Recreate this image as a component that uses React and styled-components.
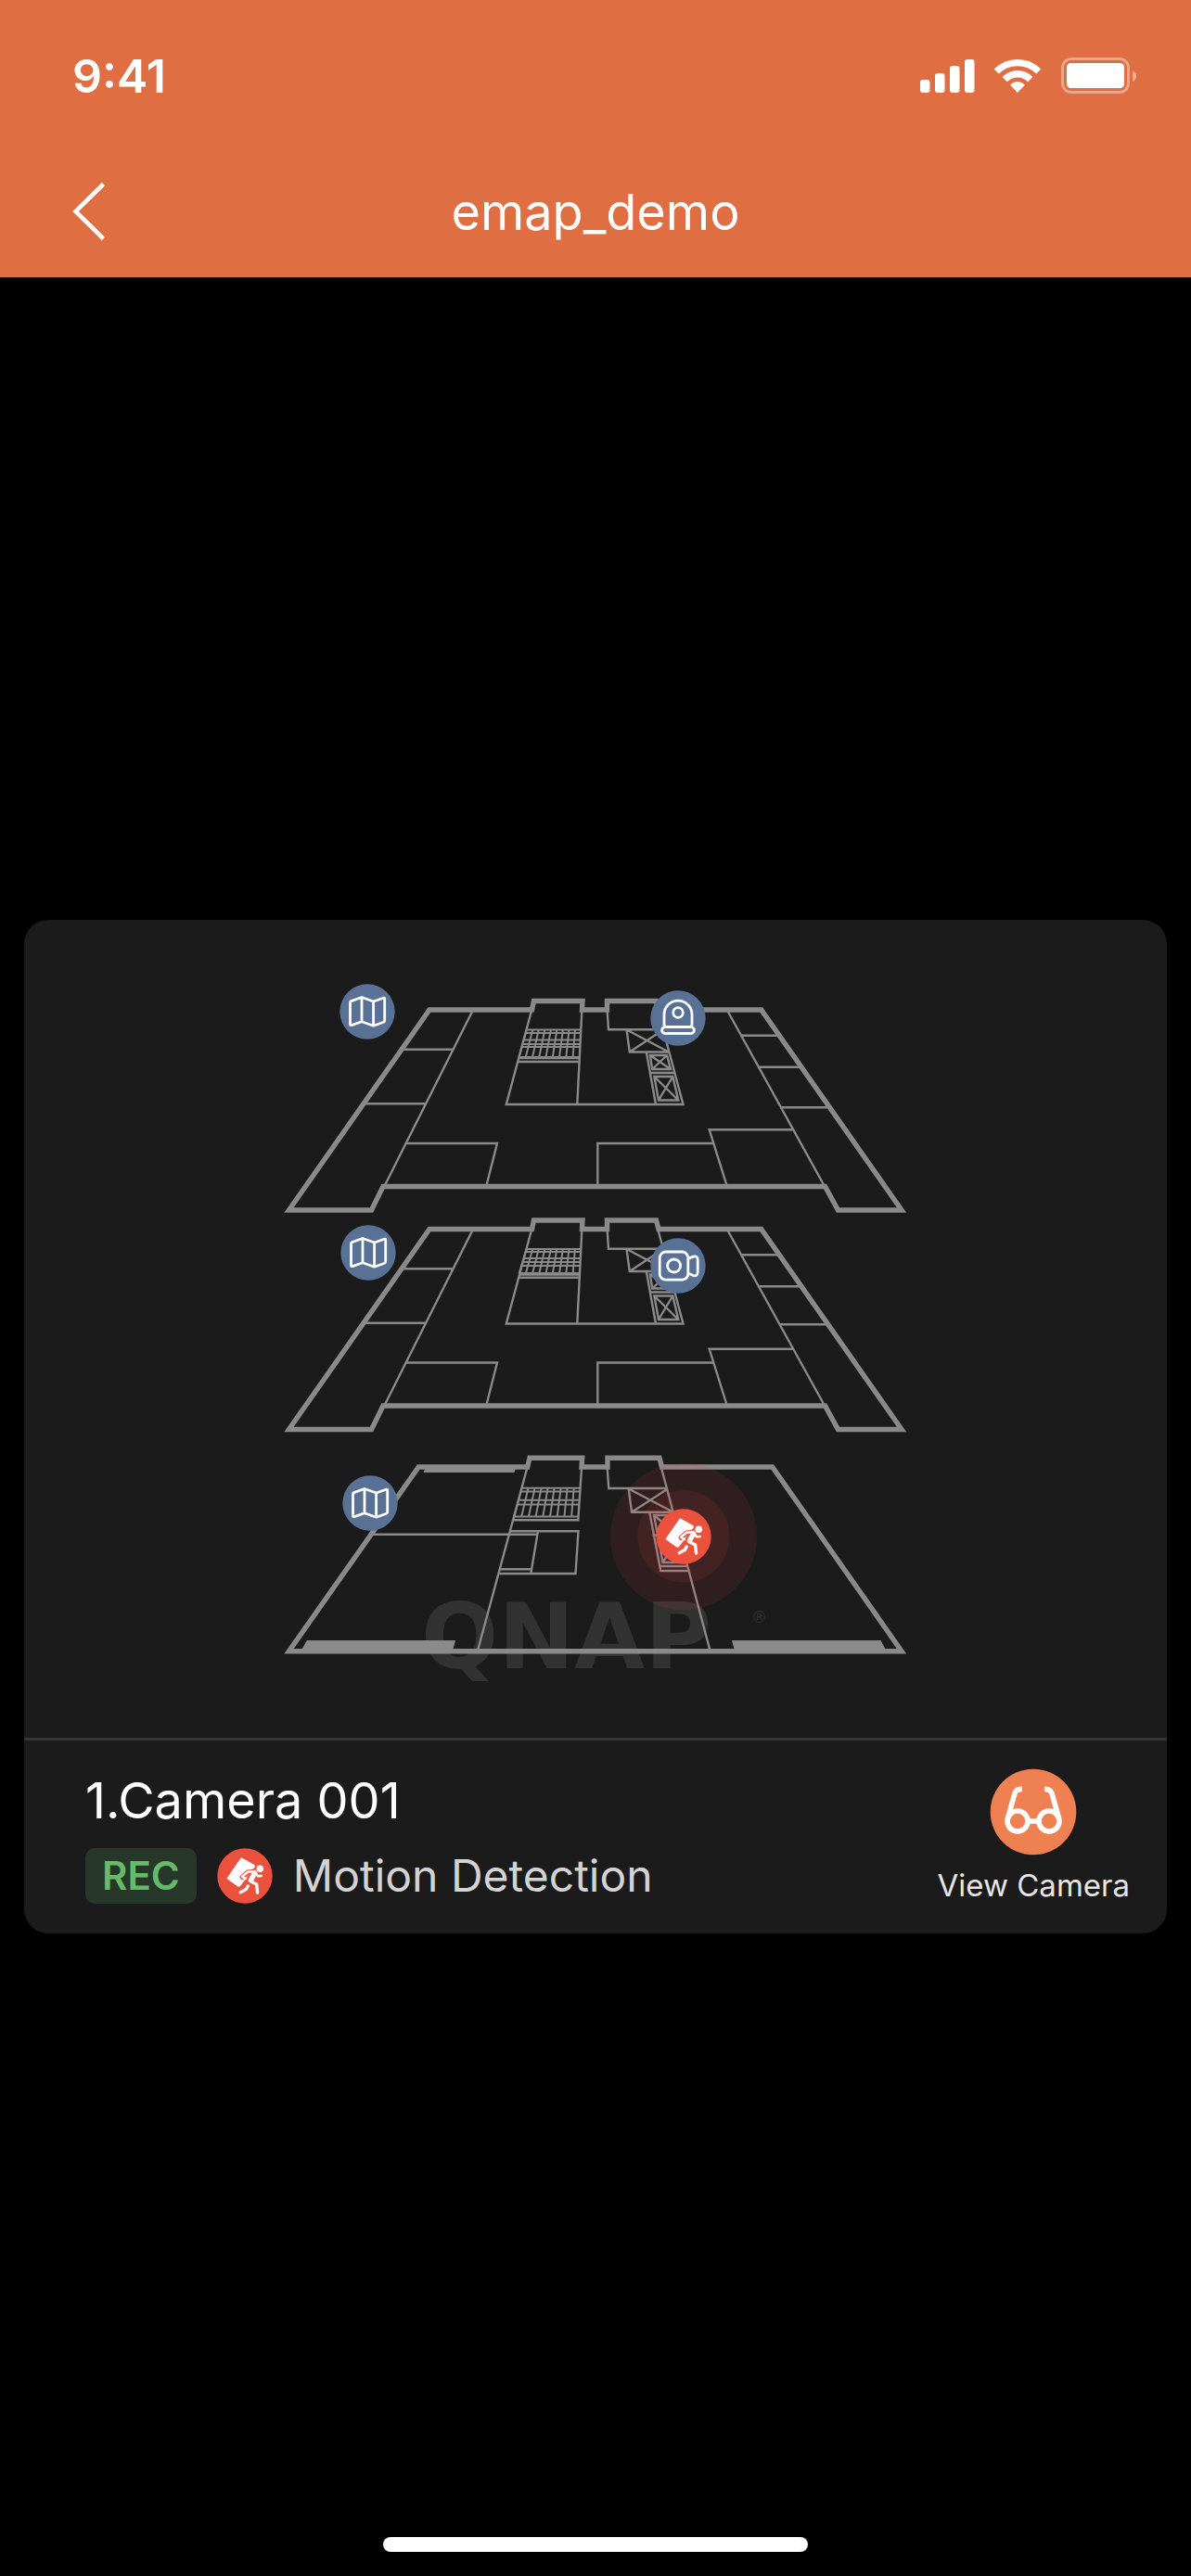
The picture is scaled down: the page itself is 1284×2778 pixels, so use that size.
import React from "react";
import styled, { createGlobalStyle } from "styled-components";

const GlobalStyle = createGlobalStyle`
  * { box-sizing: border-box; }
  body {
    margin: 0;
    background: #000;
    font-family: Inter, Roboto, "Liberation Sans", sans-serif;
    color: #fff;
  }
  button { font: inherit; color: inherit; border: 0; padding: 0; background: none; cursor: pointer; }
`;

const Screen = styled.div`
  min-height: 100vh;
  display: flex;
  flex-direction: column;
  background: #000;
`;

const Header = styled.header`
  background: #df6e42;
`;

const StatusBar = styled.div`
  display: flex;
  align-items: center;
  justify-content: space-between;
  height: 164px;
  padding: 0 58px 0 78px;
`;

const Clock = styled.span`
  font-size: 50px;
  line-height: 60px;
  font-weight: 600;
`;

const StatusIcons = styled.svg`
  display: block;
  width: 234px;
  height: 40px;
`;

const NavBar = styled.nav`
  display: grid;
  grid-template-columns: 120px 1fr 120px;
  align-items: start;
  height: 135px;
  padding: 0 36px;
`;

const BackButton = styled.button`
  display: flex;
  align-items: center;
  justify-content: center;
  height: 128px;
  svg { display: block; width: 40px; height: 68px; }
`;

const Title = styled.h1`
  margin: 0;
  text-align: center;
  font-size: 54px;
  line-height: 130px;
  font-weight: 400;
`;

const Main = styled.main`
  flex: 1;
  display: flex;
  flex-direction: column;
  justify-content: center;
  padding: 42px 26px 0;
`;

const Card = styled.section`
  border-radius: 26px;
  background: #1b1b1c;
  overflow: hidden;
`;

const MapCanvas = styled.div`
  position: relative;
  border-bottom: 3px solid #353536;
`;

const FloorPlan = styled.svg`
  display: block;
  width: 100%;
  height: auto;
`;

const Pin = styled.button`
  position: absolute;
  left: ${(p) => (p.$x / 1232) * 100}%;
  top: ${(p) => (p.$y / 882) * 100}%;
  transform: translate(-50%, -50%);
  display: grid;
  place-items: center;
  width: ${(p) => (p.$alert ? 158 : 60)}px;
  height: ${(p) => (p.$alert ? 158 : 60)}px;
  border-radius: 50%;
  background: ${(p) =>
    p.$alert
      ? "radial-gradient(circle, rgba(235, 64, 64, 0.19) 49px, rgba(235, 64, 64, 0.1) 50px)"
      : "transparent"};
`;

const Disc = styled.svg`
  display: block;
  width: 60px;
  height: 60px;
  flex: none;
`;

const Details = styled.div`
  display: flex;
  align-items: flex-start;
  justify-content: space-between;
  padding: 30px 40px 32px 66px;
`;

const Info = styled.div`
  display: flex;
  flex-direction: column;
  gap: 16px;
`;

const CameraName = styled.h2`
  margin: 0;
  font-size: 54px;
  line-height: 70px;
  font-weight: 400;
`;

const EventRow = styled.div`
  display: flex;
  align-items: center;
  gap: 22px;
`;

const RecBadge = styled.span`
  padding: 0 18px;
  border-radius: 10px;
  background: #27372a;
  color: #66bb6a;
  font-size: 42px;
  line-height: 60px;
  font-weight: 600;
`;

const EventName = styled.span`
  font-size: 48px;
  line-height: 60px;
  color: #d3d3d3;
`;

const ViewButton = styled.button`
  display: flex;
  flex-direction: column;
  align-items: center;
  gap: 12px;
  font-size: 33px;
  line-height: 40px;
  color: #e6e6e6;
  svg { display: block; width: 94px; height: 94px; }
`;

const Footer = styled.footer`
  display: flex;
  justify-content: center;
  padding-bottom: 26px;
`;

const HomeIndicator = styled.div`
  width: 458px;
  height: 16px;
  border-radius: 8px;
  background: #fff;
`;

/* Stair flight: a grid that leans from the top edge to the bottom edge */
function Stairs({ top, bottom, rows, steps = 9 }) {
  const at = (y, t) => {
    const k = (y - top.y) / (bottom.y - top.y);
    const l = top.l + (bottom.l - top.l) * k;
    const r = top.r + (bottom.r - top.r) * k;
    return l + (r - l) * t;
  };
  const cols = Array.from({ length: steps }, (_, i) => i / steps);
  return (
    <g strokeWidth="2">
      {rows.map((y) => (
        <path key={y} d={`M${at(y, 0)} ${y}H${at(y, 1)}`} />
      ))}
      {cols.map((t) => (
        <path key={t} d={`M${at(top.y, t)} ${top.y}L${at(bottom.y, t)} ${bottom.y}`} />
      ))}
    </g>
  );
}

function UpperFloor({ stairRows, stairEnd, landing, roomLine, roomX, roomEnd }) {
  return (
    <>
      <path
        strokeWidth="5.4"
        d="M463 1089H573.5L575.5 1079.5H628L627.5 1089H654.5V1079.5H707.5L710 1089H820.7L972 1305H903.5L889.5 1279.5H413L400.5 1305H311.5Z"
      />
      <g strokeWidth="2.4">
        <path d="M509.5 1090L414.5 1279M435 1131.7H489M394 1190.3H458.5M437.5 1233H536L524.3 1279" />
        <path d="M573 1090L545.8 1191H736.5L709.5 1090M627.3 1090L622.3 1191" />
        <path d="M654.7 1090L656 1110.3H715M675.5 1110.5L678.8 1134.5H721M675.5 1110.5L721 1134.5M715 1110.5L678.8 1134.5" />
        <path d="M696.8 1134.5L707 1191M701 1157H727" />
        <path d="M700.8 1138H719L723 1153H703.2ZM700.8 1138L723 1153M719 1138L703.2 1153" />
        <path d="M705.3 1161H725.3L731.3 1186.5H710ZM705.3 1161L731.3 1186.5M725.3 1161L710 1186.5" />
        <path d="M784.3 1090L888.8 1279M799.3 1116.7H839M818.3 1150.7H863" />
        <path d={`M${roomX} ${roomLine}H${roomEnd}`} />
        <path d="M854.7 1218.3H764.7L783.7 1279M768.7 1233H644.3V1279" />
        <path d={landing} />
      </g>
      <Stairs
        top={{ y: 1110.5, l: 567.7, r: 626.5 }}
        bottom={{ y: stairEnd, l: 559.5, r: 624.8 }}
        rows={stairRows}
      />
    </>
  );
}

function GroundFloor() {
  return (
    <>
      <path
        strokeWidth="5.4"
        d="M451.3 1582H568.7L571 1572.2H627.7L627 1582H655V1572.2H711L713.5 1582H832.7L972 1780.7H311.5Z"
      />
      <g stroke="none" fill="#8a8a8a">
        <path d="M458.5 1583H556L554.5 1588H456.5Z" />
        <path d="M331 1769H491L488 1780H324.5Z" />
        <path d="M789 1769H949.5L955.5 1780H792Z" />
      </g>
      <g strokeWidth="2.4">
        <path d="M568.3 1583L515 1780M402.5 1654.7H580M550 1651.3H623.5L620.5 1697H537.7M580 1651L572.3 1697M539 1692.3H573" />
        <path d="M627 1583L623.3 1639.3H553.3" />
        <path d="M654.7 1583L656.3 1605H720M677.7 1605.5L681 1630.7H726M677.7 1605.5L726 1630.7M720 1605.5L681 1630.7" />
        <path d="M713 1583L765.5 1780M700.3 1631L712.3 1694H743.3M711 1689H741M705 1634H724L739 1685H714.5ZM705 1634L730 1655M703.5 1655.5H732M708.5 1660H731L714.5 1685" />
      </g>
      <Stairs
        top={{ y: 1604.8, l: 562.5, r: 625.7 }}
        bottom={{ y: 1635.5, l: 554.5, r: 623.8 }}
        rows={[1604.8, 1608.5, 1617.7, 1622.5, 1635.5]}
      />
    </>
  );
}

function Building() {
  return (
    <FloorPlan viewBox="26 992 1232 882" role="img" aria-label="Building floor map">
      <g fill="#323233" fontFamily="'DejaVu Sans', sans-serif" fontWeight="700">
        <text x="454" y="1799" fontSize="98">QNAP</text>
        <text x="810" y="1750" fontSize="17" fontWeight="400">®</text>
      </g>
      <g fill="none" stroke="#8a8a8a">
        <UpperFloor
          stairRows={[1110.5, 1114, 1121.5, 1126, 1129, 1140]}
          stairEnd={1140}
          landing="M558.5 1145H624.5M559.5 1141H624.5"
          roomLine={1194.3}
          roomX={843}
          roomEnd={893}
        />
        <g transform="translate(0 236.5)">
          <UpperFloor
            stairRows={[1110.5, 1113.5, 1120.5, 1124.5, 1128.5, 1136.5]}
            stairEnd={1137}
            landing="M560 1138H624.5M559 1141.3H624.5"
            roomLine={1191.8}
            roomX={841}
            roomEnd={891}
          />
        </g>
        <GroundFloor />
      </g>
    </FloorPlan>
  );
}

const MapIcon = () => (
  <Disc viewBox="0 0 60 60" fill="none" stroke="#fff" strokeWidth="2.8" strokeLinejoin="round">
    <circle cx="30" cy="30" r="29.7" fill="#5a7196" stroke="none" />
    <path d="M11.5 20.2Q11.5 19 12.6 18.6L24 14.5L36.6 19L47.3 15.2Q48.7 14.8 48.7 16.2V39.6Q48.7 40.8 47.6 41.2L36.6 45.2L24 40.8L13 44.6Q11.5 45 11.5 43.6ZM24 14.5V40.8M36.6 19V45.2" />
  </Disc>
);

const DomeIcon = () => (
  <Disc viewBox="0 0 60 60" fill="none" stroke="#fff" strokeWidth="2.8">
    <circle cx="30" cy="30" r="29.7" fill="#5a7196" stroke="none" />
    <path d="M17 39.5Q15 39 15 36.5V26.2A15 15 0 0 1 45 26.2V36.5Q45 39 43 39.5" />
    <circle cx="30" cy="24" r="5.3" />
    <rect x="12.6" y="39.5" width="34.8" height="7" rx="3.5" />
  </Disc>
);

const CameraIcon = () => (
  <Disc viewBox="0 0 60 60" fill="none" stroke="#fff" strokeWidth="2.8" strokeLinejoin="round">
    <circle cx="30" cy="30" r="29.7" fill="#5a7196" stroke="none" />
    <rect x="10.2" y="15" width="30.6" height="30.2" rx="6.5" />
    <circle cx="25.6" cy="30" r="7" />
    <path d="M40.8 22.4L46.4 20.1Q51.2 19 51.2 23.5V36.8Q51.2 41.6 46.4 40.6L40.8 38" />
  </Disc>
);

const MotionIcon = () => (
  <Disc viewBox="0 0 60 60" fill="none" strokeLinecap="round" strokeLinejoin="round">
    <circle cx="30" cy="30" r="29.7" fill="#ec513e" />
    <path d="M26.3 11.2L39.8 18.6L40 20L24.4 40.6L22.8 40.8L11.4 32.6Z" fill="#fff" stroke="#fff" strokeWidth="1.6" />
    <g stroke="#ec513e">
      <path d="M40.5 26.5L35.5 34.5" strokeWidth="8" />
      <path d="M40 25.5L33 26.2L27.3 31.2" strokeWidth="5.4" />
      <path d="M33.5 39.5L31.5 44L25.5 47.5" strokeWidth="5.4" />
    </g>
    <g stroke="#fff">
      <path d="M40.5 27L36.5 34.5" strokeWidth="5.5" />
      <path d="M41 25L33.2 25.8L27 30.8L31 33" strokeWidth="2.4" />
      <path d="M42 27L44 30.3L47.8 30" strokeWidth="2.4" />
      <path d="M36.5 36L42.6 39L43.6 48" strokeWidth="3.4" />
      <path d="M33.2 41L31.2 44.6L25.3 47.7" strokeWidth="3.4" />
    </g>
    <circle cx="46.3" cy="22.3" r="3.8" fill="#fff" />
  </Disc>
);

const pins = [
  { x: 370, y: 99, label: "Map, third floor", Icon: MapIcon },
  { x: 371, y: 359, label: "Map, second floor", Icon: MapIcon },
  { x: 373, y: 629, label: "Map, first floor", Icon: MapIcon },
  { x: 705, y: 106, label: "Dome camera", Icon: DomeIcon },
  { x: 705, y: 373, label: "Box camera", Icon: CameraIcon },
  { x: 711, y: 665, label: "Motion alert", Icon: MotionIcon, alert: true },
];

export default function App() {
  return (
    <Screen>
      <GlobalStyle />
      <Header>
        <StatusBar>
          <Clock>9:41</Clock>
          <StatusIcons viewBox="991 62 234 40" fill="#fff" aria-hidden="true">
            <rect x="991" y="86" width="10.5" height="14" rx="3" />
            <rect x="1007" y="79" width="10.5" height="21" rx="3" />
            <rect x="1023" y="71" width="10.5" height="29" rx="3" />
            <rect x="1039" y="64" width="10.5" height="36" rx="3" />
            <path d="M1070.7 74.4Q1081.5 64 1096 64T1121.3 74.4L1116.2 79.4Q1107.5 71.2 1096 71.2T1075.8 79.4Z" />
            <path d="M1079.6 83Q1086.5 76 1096 76T1112.4 83L1107.2 88.2Q1102.5 83.4 1096 83.4T1084.8 88.2Z" />
            <path d="M1088.2 91.7Q1091.5 88 1096 88T1103.8 91.7L1096 100Z" />
            <rect x="1144.5" y="63.5" width="71" height="36" rx="9.5" fill="none" stroke="#fff" strokeWidth="3" opacity="0.38" />
            <rect x="1149" y="68" width="62" height="27" rx="4.5" />
            <path d="M1220 76Q1224 78 1224 82T1220 88Z" opacity="0.45" />
          </StatusIcons>
        </StatusBar>
        <NavBar>
          <BackButton aria-label="Back">
            <svg viewBox="0 0 40 68" fill="none" stroke="#fff" strokeWidth="4.6">
              <path d="M35.5 4.5L5.5 34L35.5 63.5" />
            </svg>
          </BackButton>
          <Title>emap_demo</Title>
        </NavBar>
      </Header>
      <Main>
        <Card>
          <MapCanvas>
            <Building />
            {pins.map(({ x, y, label, Icon, alert }) => (
              <Pin key={label} $x={x} $y={y} $alert={alert} aria-label={label}>
                <Icon />
              </Pin>
            ))}
          </MapCanvas>
          <Details>
            <Info>
              <CameraName>1.Camera 001</CameraName>
              <EventRow>
                <RecBadge>REC</RecBadge>
                <MotionIcon />
                <EventName>Motion Detection</EventName>
              </EventRow>
            </Info>
            <ViewButton>
              <svg viewBox="0 0 94 94" fill="none" stroke="#fff" strokeWidth="5.6">
                <circle cx="47" cy="47" r="46.3" fill="#ef8052" stroke="none" />
                <circle cx="30" cy="57" r="11" />
                <circle cx="64" cy="57" r="11" />
                <path d="M41 57H53M19.4 54L27 27Q28.6 22.4 34.8 22.4M74.6 54L67 27Q65.4 22.4 59.2 22.4" />
              </svg>
              View Camera
            </ViewButton>
          </Details>
        </Card>
      </Main>
      <Footer>
        <HomeIndicator />
      </Footer>
    </Screen>
  );
}
